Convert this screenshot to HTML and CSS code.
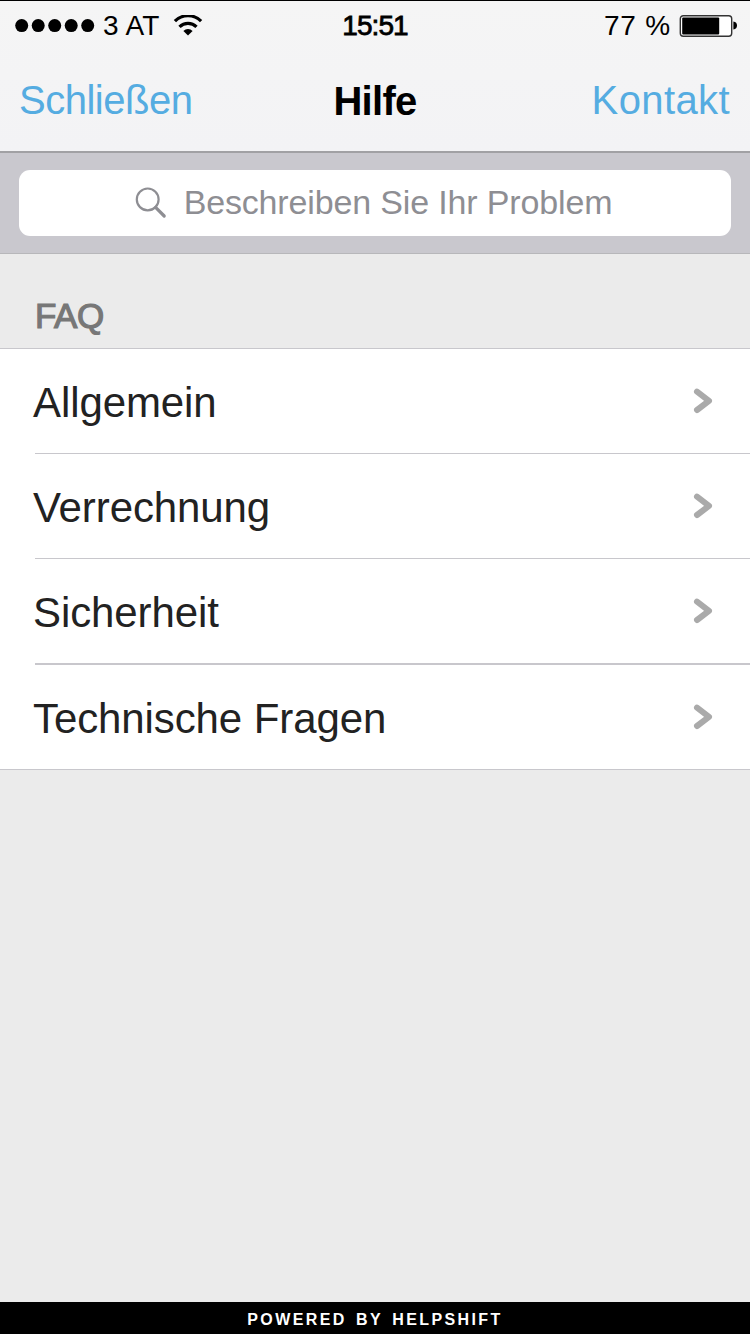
FILE: index.html
```html
<!DOCTYPE html>
<html lang="de">
<head>
    <meta charset="UTF-8">
    <meta name="viewport" content="width=device-width, initial-scale=1.0">
    <title>Hilfe</title>
    <link rel="stylesheet" href="styles.css">
</head>
<body>
    <header class="header">
        <div class="status-bar">
            <div class="status-left">
                <svg class="signal" width="80" height="14" viewBox="0 0 80 14">
                    <circle cx="6.7" cy="6.6" r="6.5"/>
                    <circle cx="23.2" cy="6.6" r="6.5"/>
                    <circle cx="39.7" cy="6.6" r="6.5"/>
                    <circle cx="56.2" cy="6.6" r="6.5"/>
                    <circle cx="72.7" cy="6.6" r="6.5"/>
                </svg>
                <span class="carrier">3 AT</span>
                <svg class="wifi" width="30" height="22" viewBox="0 0 30 22">
                    <path d="M1.9 6.2 A18.4 18.4 0 0 1 28.1 6.2" fill="none" stroke="#000" stroke-width="3.2"/>
                    <path d="M6.5 11.9 A12 12 0 0 1 23.5 11.9" fill="none" stroke="#000" stroke-width="3.2"/>
                    <path d="M10.4 16 A6.2 6.2 0 0 1 19.6 16 L15 20.4 Z"/>
                </svg>
            </div>
            <div class="clock">15:51</div>
            <div class="status-right">
                <span class="percent">77 %</span>
                <svg class="battery" width="58" height="22" viewBox="0 0 58 22">
                    <rect x="1.3" y="0.7" width="51.4" height="20.6" rx="3" fill="#fff" stroke="#333" stroke-width="1.4"/>
                    <rect x="3.2" y="2.4" width="37" height="17" rx="1"/>
                    <path d="M54.4 6.5 Q58 7 58 10.5 Q58 14 54.4 14.5 Z"/>
                </svg>
            </div>
        </div>
        <nav class="nav-bar">
            <a class="nav-link">Schließen</a>
            <h1 class="nav-title">Hilfe</h1>
            <a class="nav-link nav-right">Kontakt</a>
        </nav>
    </header>

    <div class="search-bar">
        <div class="search-field">
            <svg class="search-icon" width="32" height="32" viewBox="0 0 32 32" fill="none" stroke="#8e8e93">
                <circle cx="12.7" cy="12.4" r="10.9" stroke-width="2.2"/>
                <path d="M20.6 20.4 L29.2 29" stroke-width="3.2" stroke-linecap="round"/>
            </svg>
            <span class="search-text">Beschreiben Sie Ihr Problem</span>
        </div>
    </div>

    <h2 class="section-title">FAQ</h2>
    <ul class="list">
        <li class="row">
            <span class="label">Allgemein</span>
            <svg class="chevron" width="20" height="26" viewBox="0 0 20 26"><path d="M4 3.6 L16 12.8 L4 22"/></svg>
        </li>
        <li class="row">
            <span class="label">Verrechnung</span>
            <svg class="chevron" width="20" height="26" viewBox="0 0 20 26"><path d="M4 3.6 L16 12.8 L4 22"/></svg>
        </li>
        <li class="row row-thick">
            <span class="label">Sicherheit</span>
            <svg class="chevron" width="20" height="26" viewBox="0 0 20 26"><path d="M4 3.6 L16 12.8 L4 22"/></svg>
        </li>
        <li class="row">
            <span class="label">Technische Fragen</span>
            <svg class="chevron" width="20" height="26" viewBox="0 0 20 26"><path d="M4 3.6 L16 12.8 L4 22"/></svg>
        </li>
    </ul>

    <footer class="footer">POWERED BY HELPSHIFT</footer>
</body>
</html>
```
FILE: styles.css
```css
* {
    box-sizing: border-box;
}
body {
    margin: 0;
    height: 1334px;
    display: flex;
    flex-direction: column;
    overflow: hidden;
    background-color: #ebebeb;
    color: #222;
    font-family: "Liberation Sans", Arial, sans-serif;
}
.header {
    height: 153px;
    border-top: 1px solid #000;
    border-bottom: 2px solid #a1a1a4;
    background: linear-gradient(#f5f5f5, #f3f3f5);
}
.status-bar {
    display: grid;
    grid-template-columns: 1fr auto 1fr;
    align-items: center;
    height: 49px;
    padding: 0 13px 0 15px;
    color: #000;
    font-size: 28px;
    line-height: 49px;
}
.status-left,
.status-right {
    display: flex;
    align-items: center;
}
.status-right {
    justify-content: flex-end;
}
.carrier {
    margin-left: 8px;
    letter-spacing: 0.3px;
}
.wifi {
    margin-left: 13px;
}
.clock {
    margin-right: 2px;
    letter-spacing: -0.9px;
    -webkit-text-stroke: 0.8px #000;
}
.percent {
    margin-right: 8px;
    letter-spacing: 0.8px;
}
.nav-bar {
    display: grid;
    grid-template-columns: 1fr auto 1fr;
    height: 101px;
    padding: 0 20px 0 19px;
    line-height: 101px;
}
.nav-link {
    color: #55ace1;
    font-size: 40px;
    letter-spacing: -0.5px;
}
.nav-right {
    letter-spacing: 0.4px;
    text-align: right;
}
.nav-title {
    margin: 0;
    padding-left: 1px;
    color: #000;
    font-size: 40px;
    letter-spacing: -0.7px;
    line-height: 103px;
}
.search-bar {
    height: 101px;
    padding: 17px 19px;
    border-bottom: 1px solid #b7b7ba;
    background-color: #c9c8ce;
}
.search-field {
    display: flex;
    align-items: center;
    justify-content: center;
    height: 66px;
    padding-right: 3px;
    border-radius: 11px;
    background-color: #fff;
}
.search-text {
    margin-left: 17px;
    padding-bottom: 2px;
    color: #8e8e93;
    font-size: 34px;
    letter-spacing: -0.15px;
    line-height: 64px;
}
.section-title {
    height: 94px;
    margin: 0;
    padding-left: 35px;
    color: #777;
    font-size: 35px;
    font-weight: normal;
    letter-spacing: -0.4px;
    line-height: 124px;
    -webkit-text-stroke: 1.2px #777;
}
.list {
    margin: 0;
    padding: 0;
    border-top: 1px solid #c8c7cc;
    border-bottom: 1px solid #c8c7cc;
    background-color: #fff;
    list-style: none;
}
.row {
    display: flex;
    align-items: center;
    justify-content: space-between;
    height: 105px;
    margin-left: 35px;
    padding-right: 37px;
    border-bottom: 1px solid #c8c7cc;
}
.row-thick {
    height: 106px;
    border-bottom-width: 2px;
}
.row:last-child {
    height: 104px;
    border-bottom: none;
}
.label {
    margin-left: -2px;
    padding-top: 3px;
    font-size: 42px;
    letter-spacing: -0.1px;
}
.chevron {
    fill: none;
    stroke: #aaa;
    stroke-width: 6;
    stroke-linecap: round;
    stroke-linejoin: round;
}
.footer {
    height: 32px;
    margin-top: auto;
    background-color: #000;
    color: #fff;
    font-size: 16px;
    font-weight: bold;
    letter-spacing: 2.4px;
    line-height: 36px;
    text-align: center;
    word-spacing: 2.5px;
}
```
